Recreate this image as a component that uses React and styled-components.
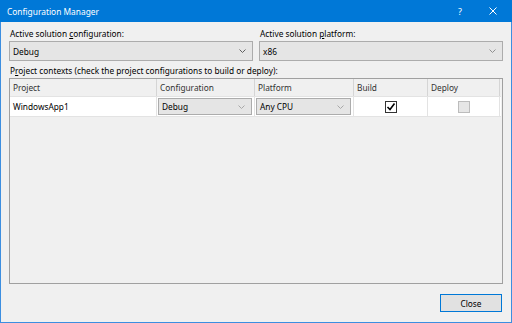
import React from "react";
import styled, { createGlobalStyle } from "styled-components";

const Global = createGlobalStyle`
  html, body { margin: 0; padding: 0; background: #f0f0f0; }
  body { font-family: "Noto Sans", "Open Sans", sans-serif; font-size: 8.3px; color: #000; }
  * { box-sizing: border-box; }
`;

const Window = styled.div`
  width: 512px;
  height: 323px;
  display: flex;
  flex-direction: column;
  background: #f0f0f0;
  border: 1px solid #3c8ee0;
  border-top: none;
`;

const TitleBar = styled.div`
  height: 22px;
  margin: 0 -1px;
  background: #0078d7;
  color: #fff;
  display: flex;
  align-items: center;
  padding-left: 7px;
  padding-right: 14px;
  font-size: 8.4px;
`;

const Title = styled.div`
  flex: 1;
`;

const TitleButton = styled.div`
  width: ${(p) => p.$w}px;
  height: 22px;
  display: flex;
  align-items: center;
  justify-content: center;
  font-size: 9px;
`;

const Body = styled.div`
  flex: 1;
  display: flex;
  flex-direction: column;
  padding: 5px 8px 10px 8px;
`;

const TopRow = styled.div`
  display: grid;
  grid-template-columns: 244px 244px;
  column-gap: 6px;
`;

const Field = styled.div`
  display: flex;
  flex-direction: column;
`;

const Label = styled.div`
  height: 14px;
  line-height: 14px;
  padding-left: 1px;
  white-space: nowrap;
`;

const U = styled.span`
  text-decoration: underline;
  text-underline-offset: 1px;
`;

const Combo = styled.div`
  height: ${(p) => p.$h || 20}px;
  background: #e5e5e5;
  border: 1px solid #acacac;
  display: flex;
  align-items: center;
  justify-content: space-between;
  padding: 0 6px 0 3px;
  flex: ${(p) => (p.$fill ? 1 : "none")};
`;

const ContextsLabel = styled(Label)`
  margin-top: 3px;
`;

const Table = styled.div`
  height: 206px;
  border: 1px solid #a0a0a0;
  background: #f0f0f0;
  display: flex;
  flex-direction: column;
`;

const Row = styled.div`
  display: grid;
  grid-template-columns: 147px 98px 99px 74px 72px;
  height: ${(p) => p.$h}px;
  background: ${(p) => (p.$header ? "#f0f0f0" : "#fff")};
  border-bottom: 1px solid #e3e3e3;
  width: 491px;
`;

const Cell = styled.div`
  display: flex;
  align-items: center;
  justify-content: ${(p) => (p.$center ? "center" : "flex-start")};
  padding: ${(p) => (p.$pad != null ? p.$pad : "0 0 0 3px")};
  border-right: 1px solid ${(p) => (p.$header ? "#d5d5d5" : "#e3e3e3")};
  white-space: nowrap;
  color: ${(p) => (p.$header ? "#333" : "#000")};
`;

const Footer = styled.div`
  flex: 1;
  display: flex;
  justify-content: flex-end;
  align-items: flex-end;
  padding-right: 1px;
`;

const Button = styled.button`
  width: 62px;
  height: 18px;
  background: #e1e1e1;
  border: 1px solid #0078d7;
  box-shadow: inset 0 0 0 1px #e1e1e1;
  font-family: inherit;
  font-size: 8.3px;
  color: #000;
  padding: 0;
`;

const Check = styled.div`
  width: 12px;
  height: 12px;
  border: 1px solid ${(p) => (p.$disabled ? "#bcbcbc" : "#333")};
  background: ${(p) => (p.$disabled ? "#e6e6e6" : "#fff")};
  display: flex;
  align-items: center;
  justify-content: center;
`;

const Chevron = ({ color = "#606060" }) => (
  <svg width="7" height="4" viewBox="0 0 7 4">
    <path d="M0.5 0.5 L3.5 3.5 L6.5 0.5" fill="none" stroke={color} strokeWidth="1" />
  </svg>
);

const CloseX = () => (
  <svg width="8" height="8" viewBox="0 0 8 8">
    <path d="M0.5 0.5 L7.5 7.5 M7.5 0.5 L0.5 7.5" stroke="#fff" strokeWidth="1" />
  </svg>
);

export default function App() {
  return (
    <>
      <Global />
      <Window>
        <TitleBar>
          <Title>Configuration Manager</Title>
          <TitleButton $w={56}>?</TitleButton>
          <TitleButton $w={10}>
            <CloseX />
          </TitleButton>
        </TitleBar>
        <Body>
          <TopRow>
            <Field>
              <Label>
                Active solution <U>c</U>onfiguration:
              </Label>
              <Combo>
                <span>Debug</span>
                <Chevron />
              </Combo>
            </Field>
            <Field>
              <Label>
                Active solution <U>p</U>latform:
              </Label>
              <Combo>
                <span>x86</span>
                <Chevron color="#909090" />
              </Combo>
            </Field>
          </TopRow>
          <ContextsLabel>
            P<U>r</U>oject contexts (check the project configurations to build or deploy):
          </ContextsLabel>
          <Table>
            <Row $header $h={18}>
              <Cell $header>Project</Cell>
              <Cell $header>Configuration</Cell>
              <Cell $header>Platform</Cell>
              <Cell $header>Build</Cell>
              <Cell $header>Deploy</Cell>
            </Row>
            <Row $h={20}>
              <Cell>WindowsApp1</Cell>
              <Cell $pad="0 2px 0 1px">
                <Combo $fill $h={17}>
                  <span>Debug</span>
                  <Chevron color="#a8a8a8" />
                </Combo>
              </Cell>
              <Cell $pad="0 2px 0 1px">
                <Combo $fill $h={17}>
                  <span>Any CPU</span>
                  <Chevron color="#a8a8a8" />
                </Combo>
              </Cell>
              <Cell $center $pad="0">
                <Check>
                  <svg width="10" height="10" viewBox="0 0 10 10">
                    <path d="M1.5 5 L4 7.5 L8.5 1.5" fill="none" stroke="#000" strokeWidth="1.6" />
                  </svg>
                </Check>
              </Cell>
              <Cell $center $pad="0">
                <Check $disabled />
              </Cell>
            </Row>
          </Table>
          <Footer>
            <Button>Close</Button>
          </Footer>
        </Body>
      </Window>
    </>
  );
}
